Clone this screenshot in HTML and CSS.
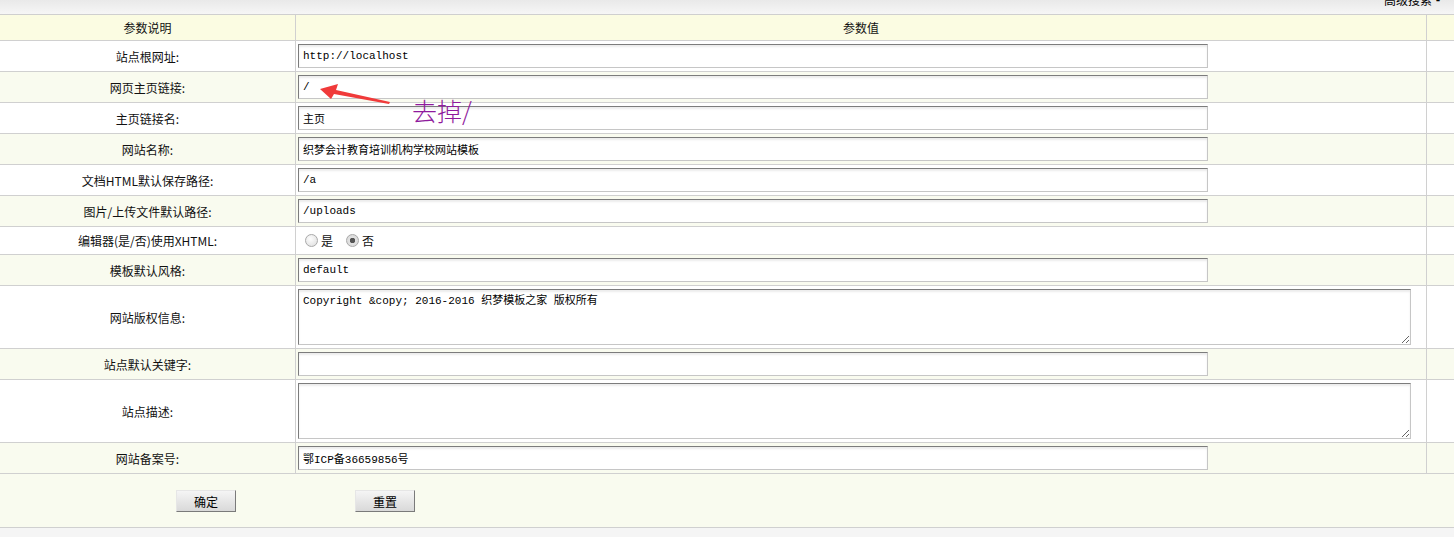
FILE: index.html
```html
<!DOCTYPE html>
<html lang="zh-CN">
  <head>
    <meta charset="UTF-8" />
    <title>系统基本参数</title>
    <link rel="stylesheet" href="styles.css">
  </head>
  <body>
    <div class="top-bar">
      <span class="top-link">高级搜索▪</span>
    </div>
    <div class="config">
      <div class="row head">
        <div class="label">参数说明</div>
        <div class="label">参数值</div>
        <div class="end"></div>
      </div>
      <div class="row">
        <div class="label">站点根网址:</div>
        <div class="value"><input class="txt" type="text" value="http://localhost" /></div>
        <div class="end"></div>
      </div>
      <div class="row alt">
        <div class="label">网页主页链接:</div>
        <div class="value"><input class="txt" type="text" value="/" /></div>
        <div class="end"></div>
      </div>
      <div class="row">
        <div class="label">主页链接名:</div>
        <div class="value"><input class="txt" type="text" value="主页" /></div>
        <div class="end"></div>
      </div>
      <div class="row alt">
        <div class="label">网站名称:</div>
        <div class="value"><input class="txt" type="text" value="织梦会计教育培训机构学校网站模板" /></div>
        <div class="end"></div>
      </div>
      <div class="row">
        <div class="label">文档HTML默认保存路径:</div>
        <div class="value"><input class="txt" type="text" value="/a" /></div>
        <div class="end"></div>
      </div>
      <div class="row alt">
        <div class="label">图片/上传文件默认路径:</div>
        <div class="value"><input class="txt" type="text" value="/uploads" /></div>
        <div class="end"></div>
      </div>
      <div class="row radio-row">
        <div class="label">编辑器(是/否)使用XHTML:</div>
        <div class="value radios">
          <label><input type="radio" name="xhtml" />是</label>
          <label><input type="radio" name="xhtml" checked />否</label>
        </div>
        <div class="end"></div>
      </div>
      <div class="row alt">
        <div class="label">模板默认风格:</div>
        <div class="value"><input class="txt" type="text" value="default" /></div>
        <div class="end"></div>
      </div>
      <div class="row">
        <div class="label">网站版权信息:</div>
        <div class="value"><textarea class="area">Copyright &amp;copy; 2016-2016 织梦模板之家 版权所有</textarea></div>
        <div class="end"></div>
      </div>
      <div class="row alt">
        <div class="label">站点默认关键字:</div>
        <div class="value"><input class="txt" type="text" value="" /></div>
        <div class="end"></div>
      </div>
      <div class="row">
        <div class="label">站点描述:</div>
        <div class="value"><textarea class="area"></textarea></div>
        <div class="end"></div>
      </div>
      <div class="row alt">
        <div class="label">网站备案号:</div>
        <div class="value"><input class="txt" type="text" value="鄂ICP备36659856号" /></div>
        <div class="end"></div>
      </div>
      <div class="actions">
        <button class="btn">确定</button>
        <button class="btn">重置</button>
      </div>

      <!-- annotation drawn over the screenshot -->
      <svg class="note-arrow" width="80" height="24" viewBox="0 0 80 24">
        <polygon points="0,5 18,0 16,6 70,18 69,20 14,10 11,15" fill="#f03a3a" />
      </svg>
      <span class="note-text">去掉/</span>
    </div>
  </body>
</html>
```

FILE: styles.css
```css
html,
body {
  margin: 0;
  padding: 0;
  height: 537px;
  overflow: hidden;
}
body {
  background: #f5f5f5;
  font-family: "Noto Sans CJK SC", "DejaVu Sans", sans-serif;
  font-size: 12px;
  color: #111;
}

/* cut-off header strip at the very top */
.top-bar {
  height: 14px;
  overflow: hidden;
  background: linear-gradient(#e9e9e9, #f6f6f6);
  border-bottom: 1px solid #cfcfcf;
  display: flex;
  justify-content: flex-end;
  padding-right: 10px;
}
.top-link {
  font-size: 12px;
  line-height: 12px;
  margin-top: -6px;
  color: #000;
}

.config {
  position: relative;
}

.row {
  display: grid;
  grid-template-columns: 296px 1131px 27px;
  background: #fff;
  border-bottom: 1px solid #d0d0d0;
}
.row > div {
  box-sizing: border-box;
  border-right: 1px solid #d0d0d0;
}
.row > div:last-child {
  border-right: none;
}
.row.alt {
  background: #f9fbef;
}
.row.head {
  background: #fbfce2;
  height: 25px;
}

.label {
  display: flex;
  align-items: center;
  justify-content: center;
  color: #111;
}

.value {
  padding: 3px 0 3px 2px;
}

.txt {
  display: block;
  box-sizing: border-box;
  width: 910px;
  height: 24px;
  margin: 0;
  padding: 0 4px;
  border: 1px solid;
  border-color: #7c7c7c #c6c6c6 #c6c6c6 #7c7c7c;
  box-shadow: inset 0 2px 2px #ececec;
  background: #fff;
  font-family: "Liberation Mono", "Noto Sans CJK SC", monospace;
  font-size: 11px;
  color: #000;
}

.area {
  display: block;
  box-sizing: border-box;
  width: 1113px;
  height: 56px;
  margin: 0;
  padding: 4px;
  border: 1px solid;
  border-color: #7c7c7c #c6c6c6 #c6c6c6 #7c7c7c;
  box-shadow: inset 0 2px 2px #ececec;
  font-family: "Liberation Mono", "Noto Sans CJK SC", monospace;
  font-size: 11px;
  line-height: 14px;
  color: #000;
}

.radio-row {
  height: 27px;
}
.radios {
  display: flex;
  align-items: center;
  gap: 8px;
  padding: 0 0 0 4px;
}
.radios label {
  display: flex;
  align-items: center;
}
.radios input {
  appearance: none;
  box-sizing: border-box;
  margin: 0 3px 0 5px;
  width: 13px;
  height: 13px;
  border: 1px solid #a9a9a9;
  border-radius: 50%;
  background: radial-gradient(circle at 40% 35%, #fdfdfd, #dcdcdc);
}
.radios input:checked {
  background: radial-gradient(circle, #555 0, #555 2.5px, #e2e2e2 3px, #d6d6d6);
}

.actions {
  display: flex;
  align-items: flex-start;
  gap: 119px;
  height: 54px;
  box-sizing: border-box;
  padding: 16px 0 0 176px;
  background: #f9fbef;
  border-bottom: 1px solid #d0d0d0;
}
.btn {
  width: 60px;
  height: 22px;
  padding: 0;
  border: 1px solid;
  border-color: #e6e6e6 #7a7a7a #7a7a7a #e6e6e6;
  background: linear-gradient(#f5f5f5, #e4e4e4 60%, #d9d9d9);
  font-family: "Noto Sans CJK SC", sans-serif;
  font-size: 12px;
  color: #000;
}

.note-arrow {
  position: absolute;
  left: 320px;
  top: 69px;
}
.note-text {
  position: absolute;
  left: 412px;
  top: 78px;
  font-size: 25px;
  line-height: 34px;
  font-weight: 300;
  color: #8f1a9d;
}
```
